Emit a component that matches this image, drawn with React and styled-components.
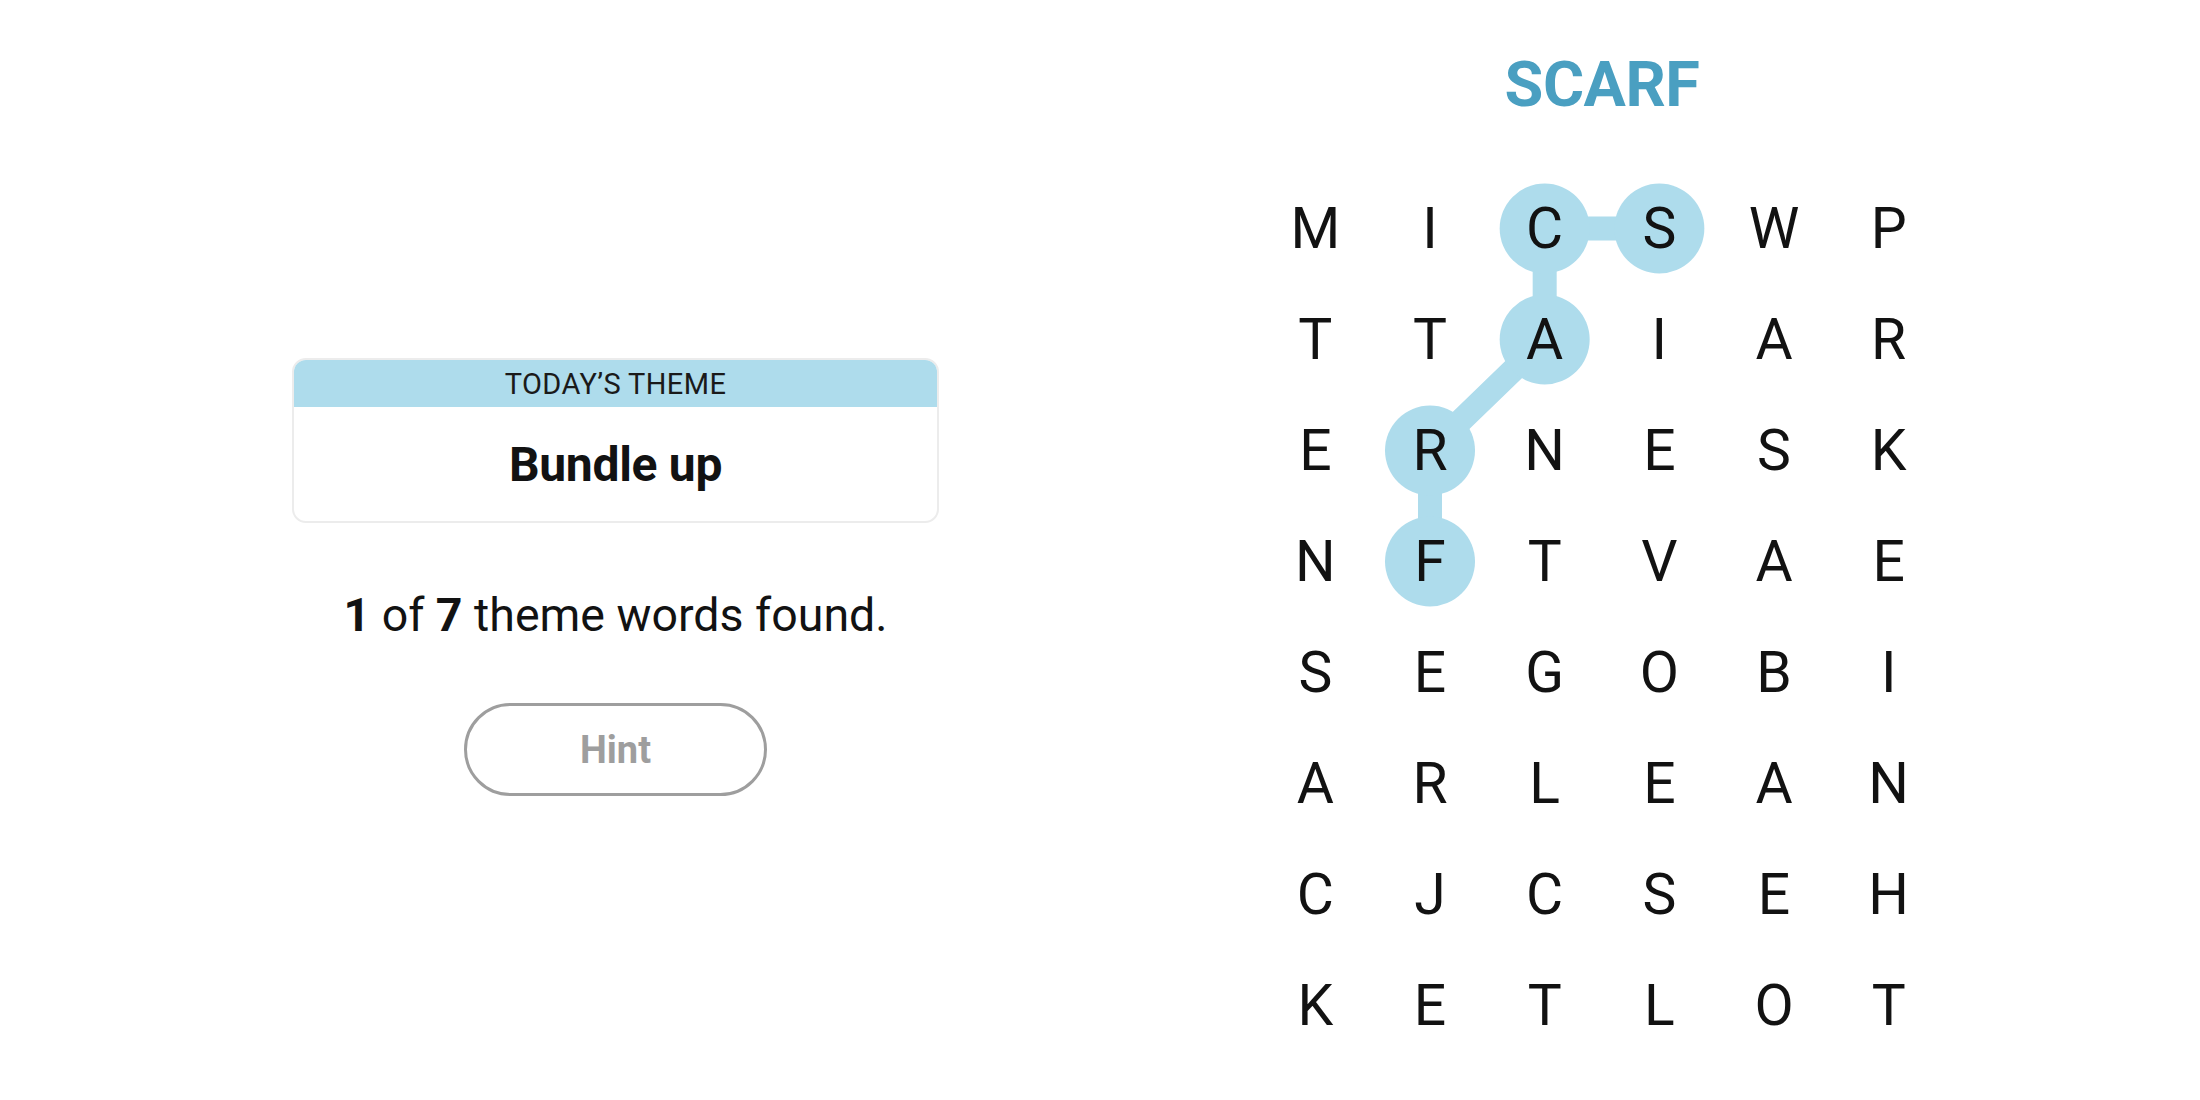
import styled, { createGlobalStyle } from "styled-components";

const GlobalStyle = createGlobalStyle`
  html, body {
    margin: 0;
    padding: 0;
    background: #fff;
  }
  body {
    font-family: "Roboto", "Liberation Sans", sans-serif;
    color: #121212;
  }
`;

const BLUE = "#aedcec";
const COLS = 6;
const CELL_W = 114.67;
const CELL_H = 111;

const letters = [
  "MICSWP",
  "TTAIAR",
  "ERNESK",
  "NFTVAE",
  "SEGOBI",
  "ARLEAN",
  "CJCSEH",
  "KETLOT",
];

// path of the word being spelled: [row, col]
const path = [
  [0, 3],
  [0, 2],
  [1, 2],
  [2, 1],
  [3, 1],
];

const center = ([r, c]) => [c * CELL_W + CELL_W / 2, r * CELL_H + CELL_H / 2];

const Trail = () => {
  const pts = path.map(center);
  return (
    <TrailSvg width={COLS * CELL_W} height={letters.length * CELL_H}>
      <polyline
        points={pts.map((p) => p.join(",")).join(" ")}
        fill="none"
        stroke={BLUE}
        strokeWidth="24"
        strokeLinejoin="round"
      />
      {pts.map(([x, y], i) => (
        <circle key={i} cx={x} cy={y} r="45" fill={BLUE} />
      ))}
    </TrailSvg>
  );
};

const ThemeCard = () => (
  <Card>
    <CardHeader>TODAY’S THEME</CardHeader>
    <CardBody>Bundle up</CardBody>
  </Card>
);

export default function App() {
  return (
    <Page>
      <GlobalStyle />
      <Sidebar>
        <ThemeCard />
        <Progress>
          <b>1</b> of <b>7</b> theme words found.
        </Progress>
        <HintButton>Hint</HintButton>
      </Sidebar>
      <Board>
        <Word>SCARF</Word>
        <Grid>
          <Trail />
          {letters.map((row, r) =>
            row.split("").map((ch, c) => <Cell key={`${r}-${c}`}>{ch}</Cell>)
          )}
        </Grid>
      </Board>
    </Page>
  );
}

const Page = styled.main`
  display: flex;
  align-items: flex-start;
  width: 2200px;
  height: 1100px;
  padding-left: 292px;
  box-sizing: border-box;
  gap: 319px;
  overflow: hidden;
`;

const Sidebar = styled.section`
  width: 647px;
  display: flex;
  flex-direction: column;
  align-items: center;
  padding-top: 358px;
`;

const Card = styled.div`
  width: 100%;
  border: 2px solid #ececec;
  border-radius: 14px;
  overflow: hidden;
  box-sizing: border-box;
`;

const CardHeader = styled.div`
  height: 47px;
  background: ${BLUE};
  display: flex;
  align-items: center;
  justify-content: center;
  font-size: 29px;
  letter-spacing: 0.4px;
  color: #1a1a1a;
`;

const CardBody = styled.div`
  height: 114px;
  display: flex;
  align-items: center;
  justify-content: center;
  font-weight: 700;
  font-size: 48px;
  letter-spacing: -0.3px;
  color: #121212;
`;

const Progress = styled.p`
  margin: 66px 0 0;
  font-size: 46.5px;
  line-height: 52px;
  color: #121212;

  b {
    font-weight: 700;
  }
`;

const HintButton = styled.button`
  margin-top: 62px;
  width: 303px;
  height: 93px;
  border: 3px solid #9e9e9e;
  border-radius: 47px;
  background: #fff;
  font-family: "Roboto", sans-serif;
  font-weight: 700;
  font-size: 38px;
  color: #9e9e9e;
`;

const Board = styled.section`
  width: ${COLS * CELL_W}px;
  display: flex;
  flex-direction: column;
  align-items: center;
`;

const Word = styled.h1`
  margin: 51px 0 0;
  height: 122px;
  font-weight: 700;
  font-size: 63px;
  line-height: 68px;
  letter-spacing: -0.5px;
  color: #4a9fc1;
`;

const Grid = styled.div`
  position: relative;
  display: grid;
  grid-template-columns: repeat(${COLS}, ${CELL_W}px);
  grid-auto-rows: ${CELL_H}px;
`;

const TrailSvg = styled.svg`
  position: absolute;
  inset: 0;
`;

const Cell = styled.div`
  position: relative;
  display: flex;
  align-items: center;
  justify-content: center;
  font-size: 57px;
  color: #121212;
`;
